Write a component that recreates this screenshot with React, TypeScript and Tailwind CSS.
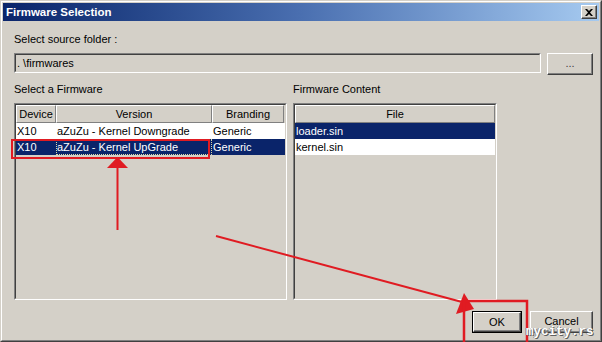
import React from 'react';

const raised =
  'border border-t-white border-l-white border-r-[#404040] border-b-[#404040] shadow-[inset_-1px_-1px_#808080]';
const sunkenOuter = 'border border-t-[#808080] border-l-[#808080] border-r-white border-b-white';
const sunkenInner = 'border border-t-[#404040] border-l-[#404040] border-r-[#d4d0c8] border-b-[#d4d0c8]';
const headerCell =
  'h-full flex items-center justify-center border border-t-white border-l-white border-r-[#808080] border-b-[#808080]';

const CloseGlyph: React.FC = () => (
  <svg width="8" height="7" viewBox="0 0 8 7">
    <path d="M0 0h2l2 2 2-2h2L5 3.5 8 7H6L4 5 2 7H0l3-3.5z" fill="#000" />
  </svg>
);

export default function App() {
  return (
    <div className="w-[602px] h-[342px] relative overflow-hidden font-['Liberation_Sans',Arial,sans-serif] text-[11px] leading-[13px] text-black">
      <div className="h-full bg-[#d4d0c8] border border-t-[#d4d0c8] border-l-[#d4d0c8] border-r-[#404040] border-b-[#404040]">
        <div className="h-full p-px flex flex-col border border-t-white border-l-white border-r-[#808080] border-b-[#808080]">
          {/* Title bar */}
          <div className="h-[18px] flex items-center justify-between bg-linear-to-r from-[#0a246a] via-[#4a6fb0] to-[#a6caf0] pl-[3px] pr-[2px]">
            <span className="font-bold text-white text-[11.5px]">Firmware Selection</span>
            <button className={`w-[16px] h-[14px] bg-[#d4d0c8] flex items-center justify-center ${raised}`}>
              <CloseGlyph />
            </button>
          </div>

          {/* Body */}
          <div className="flex-1 flex flex-col pl-[11px] pr-[6px] pt-[12px]">
            <div>Select source folder :</div>
            <div className="mt-[7px] flex items-start gap-[6px]">
              <div className={`flex-1 h-[20px] ${sunkenOuter}`}>
                <div className={`h-full flex items-center pl-px ${sunkenInner}`}>. \firmwares</div>
              </div>
              <button className={`w-[46px] h-[22px] bg-[#d4d0c8] flex items-center justify-center pb-[2px] text-[#404040] ${raised}`}>
                ...
              </button>
            </div>

            <div className="mt-[8px] flex gap-[6px]">
              {/* Firmware list */}
              <div className="w-[273px] flex flex-col">
                <div>Select a Firmware</div>
                <div className={`mt-[7px] h-[197px] ${sunkenOuter}`}>
                  <div className={`h-full flex flex-col ${sunkenInner}`}>
                    <div className="h-[18px] flex">
                      <div className={`w-[40px] ${headerCell}`}>Device</div>
                      <div className={`w-[156px] ${headerCell}`}>Version</div>
                      <div className={`w-[72px] ${headerCell}`}>Branding</div>
                    </div>
                    <div className="h-[16px] flex bg-white leading-[16px]">
                      <div className="w-[40px] pl-px">X10</div>
                      <div className="w-[156px] pl-px">aZuZu - Kernel Downgrade</div>
                      <div className="w-[72px] pl-px">Generic</div>
                    </div>
                    <div className="h-[16px] flex bg-[#0a246a] text-white leading-[14px]">
                      <div className="w-[40px] pl-px pt-px">X10</div>
                      <div className="w-[156px] border border-dotted border-[#d8d8a8]">aZuZu - Kernel UpGrade</div>
                      <div className="w-[72px] pl-px pt-px">Generic</div>
                    </div>
                  </div>
                </div>
              </div>

              {/* Firmware content */}
              <div className="w-[204px] flex flex-col">
                <div>Firmware Content</div>
                <div className={`mt-[7px] h-[197px] ${sunkenOuter}`}>
                  <div className={`h-full flex flex-col ${sunkenInner}`}>
                    <div className="h-[18px] flex">
                      <div className={`w-full ${headerCell}`}>File</div>
                    </div>
                    <div className="h-[16px] pl-px bg-[#0a246a] text-white leading-[16px]">loader.sin</div>
                    <div className="h-[16px] pl-px bg-white leading-[16px]">kernel.sin</div>
                  </div>
                </div>
              </div>
            </div>

            <div className="mt-[11px] flex justify-end gap-[8px]">
              <div className="border border-black">
                <button className={`w-[48px] h-[20px] bg-[#d4d0c8] flex items-center justify-center ${raised}`}>OK</button>
              </div>
              <button className={`w-[63px] h-[22px] bg-[#d4d0c8] flex items-start justify-center pt-[3px] ${raised}`}>Cancel</button>
            </div>
          </div>
        </div>
      </div>

      {/* Red annotations */}
      <svg className="absolute inset-0 pointer-events-none" width="602" height="342" viewBox="0 0 602 342">
        <rect x="12" y="140" width="197" height="18" fill="none" stroke="#e01b22" strokeWidth="2" />
        <line x1="117.5" y1="230" x2="117.5" y2="166" stroke="#e01b22" strokeWidth="2" />
        <polygon points="117.5,157 107,168 128,168" fill="#e01b22" />
        <line x1="216" y1="236" x2="462" y2="302" stroke="#e01b22" strokeWidth="2" />
        <polygon points="464,293 456,314 474,309" fill="#e01b22" />
        <rect x="464" y="301" width="63" height="44" fill="none" stroke="#e01b22" strokeWidth="2.5" />
      </svg>

      {/* Watermark */}
      <div className="absolute left-[526px] top-[326px] font-['Liberation_Mono',monospace] text-[12.5px] leading-[13px] font-bold text-white [text-shadow:1px_1px_0_#606060,-1px_0_0_#909090]">
        mycity.rs
      </div>
    </div>
  );
}
